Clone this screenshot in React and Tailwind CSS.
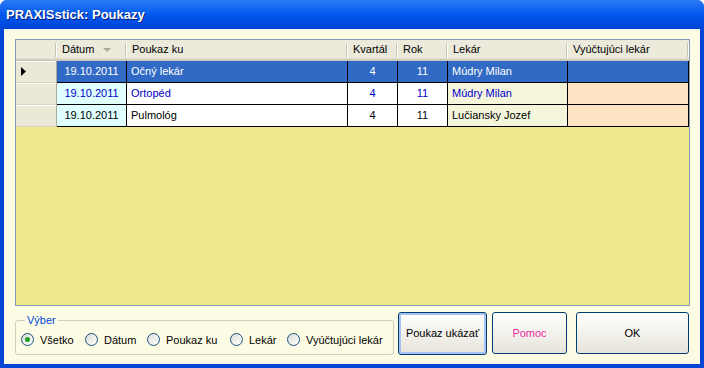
import React from 'react';

const cols = [
  { key: 'datum', title: 'Dátum', w: 'w-[70px]', sort: true },
  { key: 'poukaz', title: 'Poukaz ku', w: 'w-[221px]' },
  { key: 'kvartal', title: 'Kvartál', w: 'w-[50px]' },
  { key: 'rok', title: 'Rok', w: 'w-[50px]' },
  { key: 'lekar', title: 'Lekár', w: 'w-[120px]' },
  { key: 'vyuct', title: 'Vyúčtujúci lekár', w: 'w-[121px]' },
];

const rows = [
  { datum: '19.10.2011', poukaz: 'Očný lekár', kvartal: '4', rok: '11', lekar: 'Múdry Milan', vyuct: '', selected: true },
  { datum: '19.10.2011', poukaz: 'Ortopéd', kvartal: '4', rok: '11', lekar: 'Múdry Milan', vyuct: '', blue: true },
  { datum: '19.10.2011', poukaz: 'Pulmológ', kvartal: '4', rok: '11', lekar: 'Lučiansky Jozef', vyuct: '' },
];

// cell backgrounds for unselected rows
const cellBg = {
  datum: 'bg-[#e0ffff]',
  poukaz: 'bg-white',
  kvartal: 'bg-white',
  rok: 'bg-white',
  lekar: 'bg-[#f5f5dc]',
  vyuct: 'bg-[#ffe4c4]',
};

const cellAlign = {
  datum: 'justify-center',
  poukaz: 'justify-start pl-[4px]',
  kvartal: 'justify-center',
  rok: 'justify-center',
  lekar: 'justify-start pl-[4px]',
  vyuct: 'justify-start pl-[4px]',
};

function HeaderDivider() {
  return <span className="ml-auto w-[2px] h-[14px] border-l border-[#c7c5b2] border-r border-r-white shrink-0"></span>;
}

function Radio({ label, checked, w }) {
  return (
    <div className={`flex items-center ${w}`}>
      <span className="w-[13px] h-[13px] rounded-full border border-[#1c5180] bg-gradient-to-br from-[#dcdcd6] to-white flex items-center justify-center shrink-0">
        {checked && <span className="w-[5px] h-[5px] rounded-full bg-[#21a121]"></span>}
      </span>
      <span className="ml-[6px] whitespace-nowrap">{label}</span>
    </div>
  );
}

function Button({ children, className = '', focused }) {
  return (
    <button className={`h-[42px] rounded-[3px] border border-[#003c74] bg-gradient-to-b from-white to-[#e6e4da] flex items-center justify-center ${focused ? 'shadow-[inset_0_0_0_2px_#a6c3f3]' : ''} ${className}`}>
      {children}
    </button>
  );
}

export default function App() {
  return (
    <div className="w-[704px] h-[368px] bg-white font-['Liberation_Sans',Arial,sans-serif] text-[11px] text-black">
      <div className="flex flex-col w-full h-full rounded-t-[7px] overflow-hidden bg-[#0846d8]">
        {/* Title bar */}
        <div className="h-[29px] shrink-0 flex items-center pl-[6px] bg-gradient-to-b from-[#2a7bf5] via-[#0058ee] to-[#0044d8]">
          <span className="text-white font-bold text-[13px] [text-shadow:1px_1px_#0a1e74]">PRAXISstick: Poukazy</span>
        </div>

        {/* Client area */}
        <div className="flex-1 mx-[4px] mb-[4px] bg-[#fcfce5] pl-[11px] pr-[10px] pt-[10px] flex flex-col">
          {/* Grid */}
          <div className="h-[267px] border border-[#7f9db9] bg-[#f0e68c] flex flex-col">
            {/* Header row */}
            <div className="h-[21px] flex bg-[#ebeadb] shadow-[inset_0_-1px_#cbc7b8,inset_0_-2px_#d6d2c2,inset_0_-3px_#e2decd]">
              <div className="w-[41px] flex items-center pb-[2px]">
                <HeaderDivider />
              </div>
              {cols.map((c) => (
                <div key={c.key} className={`${c.w} flex items-center pl-[5px] pb-[2px]`}>
                  <span className="whitespace-nowrap">{c.title}</span>
                  {c.sort && (
                    <svg width="8" height="4" viewBox="0 0 8 4" className="ml-auto mr-[5px]">
                      <path d="M0 0h8L4 4z" fill="#aca899" />
                    </svg>
                  )}
                  <HeaderDivider />
                </div>
              ))}
            </div>

            {/* Data rows */}
            {rows.map((r, i) => (
              <div key={i} className="h-[22px] flex">
                <div className="w-[41px] bg-[#ebe8d8] border-r border-[#aca899] border-b border-b-[#d6d2c2] shadow-[inset_0_1px_white] flex items-center pl-[5px]">
                  {r.selected && (
                    <svg width="5" height="9" viewBox="0 0 5 9">
                      <path d="M0 0l5 4.5L0 9z" fill="black" />
                    </svg>
                  )}
                </div>
                {cols.map((c) => (
                  <div
                    key={c.key}
                    className={`${c.w} ${c.key === 'vyuct' ? 'w-[120px]' : ''} border-r border-b border-black flex items-center ${cellAlign[c.key]} ${r.selected ? 'bg-[#316ac5] text-white' : cellBg[c.key]} ${r.blue ? 'text-[#0000cd]' : ''}`}
                  >
                    <span className="whitespace-nowrap">{r[c.key]}</span>
                  </div>
                ))}
              </div>
            ))}
          </div>

          {/* Bottom */}
          <div className="flex mt-[6px]">
            <fieldset className="w-[379px] h-[43px] border border-[#d0d0bf] rounded-[3px] px-[5px] pb-[4px]">
              <legend className="ml-[4px] px-[2px] text-[#0046d5]">Výber</legend>
              <div className="flex items-center h-full pt-[1px]">
                <Radio label="Všetko" checked w="w-[64px]" />
                <Radio label="Dátum" w="w-[62px]" />
                <Radio label="Poukaz ku" w="w-[83px]" />
                <Radio label="Lekár" w="w-[57px]" />
                <Radio label="Vyúčtujúci lekár" w="w-[95px]" />
              </div>
            </fieldset>
            <Button focused className="ml-[4px] w-[89px] h-[43px]">Poukaz ukázať</Button>
            <Button className="ml-[5px] w-[75px] text-[#ec2d9b]">Pomoc</Button>
            <Button className="ml-[9px] w-[113px]">OK</Button>
          </div>
        </div>
      </div>
    </div>
  );
}
